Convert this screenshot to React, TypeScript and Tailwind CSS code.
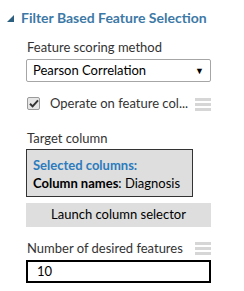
import React from "react";

const Hamburger = () => (
  <div className="flex flex-col gap-[2px] w-[16px] shrink-0">
    <div className="h-[3px] bg-[#d6d6d6]" />
    <div className="h-[3px] bg-[#d6d6d6]" />
    <div className="h-[3px] bg-[#d6d6d6]" />
  </div>
);

export default function App() {
  return (
    <div
      className="w-[244px] h-[291px] bg-white text-[#333333] overflow-hidden"
      style={{ fontFamily: 'Lato, "Open Sans", sans-serif' }}
    >
      <div className="flex items-center pt-[8px] pl-[7px] h-[28px]">
        <svg width="7" height="7" viewBox="0 0 7 7" className="mr-[7px] mt-[1px]">
          <polygon points="7,0 7,7 0,7" fill="#2d5f80" />
        </svg>
        <span className="text-[14px] font-bold leading-[20px] text-[#3d79a6] whitespace-nowrap">
          Filter Based Feature Selection
        </span>
      </div>

      <div className="pl-[26px] w-[211px] flex flex-col">
        <div className="mt-[10px] text-[13px] leading-[18px] pl-[1px] whitespace-nowrap">Feature scoring method</div>
        <div className="mt-[3px] h-[23px] border border-[#a6a6a6] rounded-[2px] flex items-center justify-between pl-[6px] pr-[6px]">
          <span className="text-[13px] text-black whitespace-nowrap">Pearson Correlation</span>
          <span className="text-[9px] text-black">▼</span>
        </div>

        <div className="mt-[13px] h-[16px] flex items-center justify-between">
          <div className="flex items-center">
            <div className="ml-[1px] w-[13px] h-[13px] border border-[#9a9a9a] bg-[#e6e6e6] rounded-[2px] flex items-center justify-center">
              <svg width="10" height="9" viewBox="0 0 10 9">
                <path d="M1 4.8 L3.6 7.4 L9 1.4" stroke="#333" strokeWidth="2" fill="none" />
              </svg>
            </div>
            <span className="ml-[10px] text-[13px] leading-[16px] whitespace-nowrap">Operate on feature col...</span>
          </div>
          <div className="mt-[3px]">
            <Hamburger />
          </div>
        </div>

        <div className="mt-[18px] text-[13px] leading-[18px] pl-[1px]">Target column</div>
        <div className="mt-[2px] w-[167px] h-[48px] border border-[#333] bg-[#dedede] px-[6px] pt-[6px] flex flex-col">
          <div className="text-[13px] font-bold leading-[18px] text-[#2b7bbd] whitespace-nowrap">Selected columns:</div>
          <div className="text-[13px] leading-[18px] text-black whitespace-nowrap">
            <span className="font-bold">Column names</span>: Diagnosis
          </div>
        </div>

        <div className="mt-[6px] h-[24px] bg-[#dedede] flex items-center justify-center text-[13px] text-black whitespace-nowrap">
          Launch column selector
        </div>

        <div className="mt-[12px] h-[18px] flex items-center justify-between">
          <span className="text-[13px] leading-[18px] pl-[1px] whitespace-nowrap">Number of desired features</span>
          <Hamburger />
        </div>
        <div className="mt-[3px] h-[23px] border-[2.5px] border-black flex items-center pl-[9px] text-[13px] text-black">
          10
        </div>
      </div>
    </div>
  );
}
